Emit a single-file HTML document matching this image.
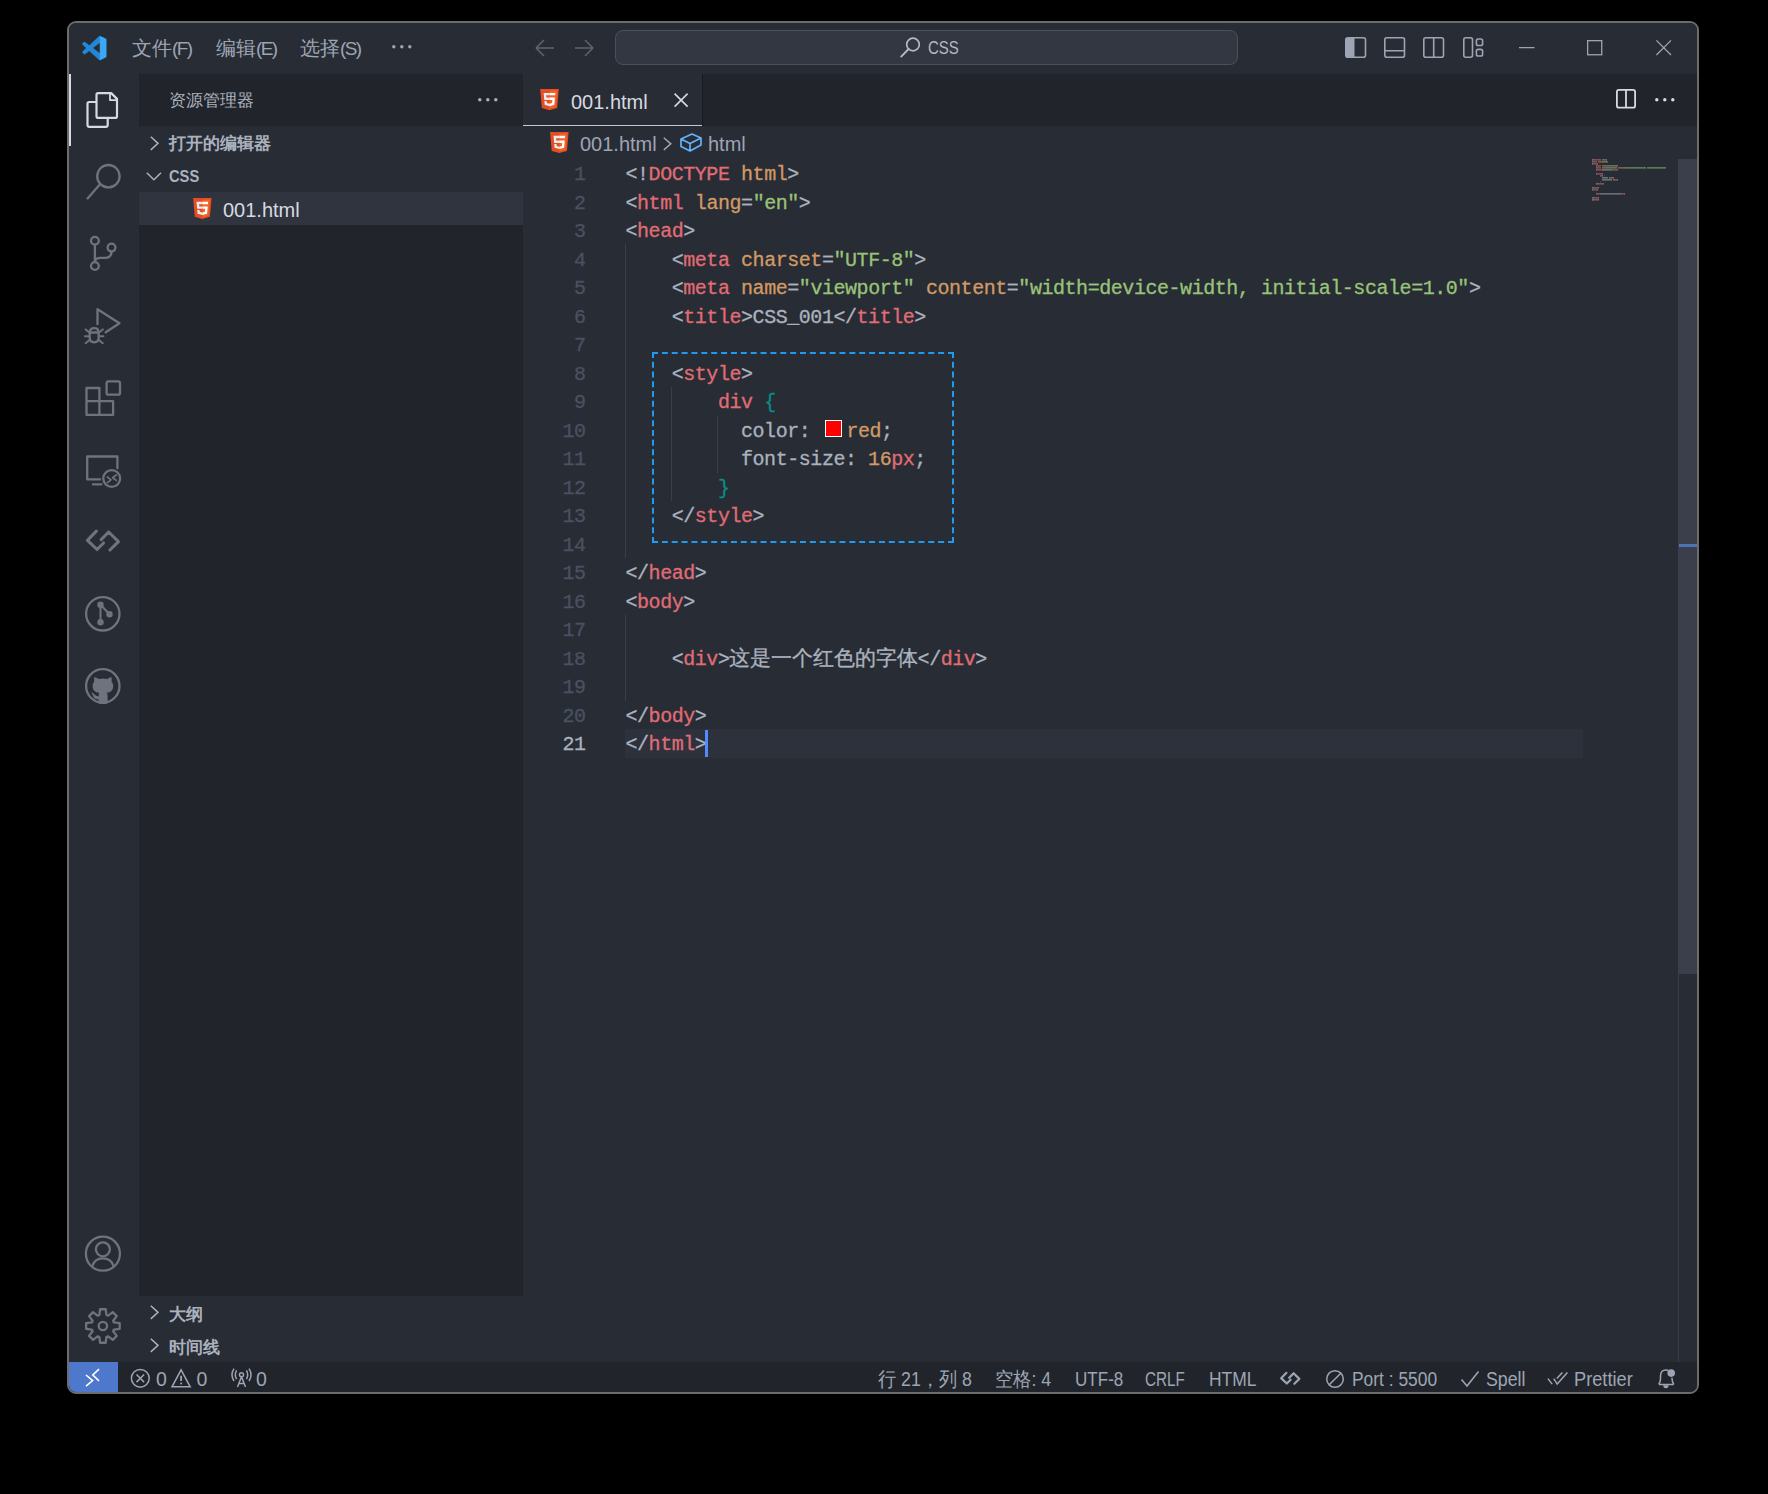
<!DOCTYPE html>
<html><head><meta charset="utf-8">
<style>
*{margin:0;padding:0;box-sizing:border-box}
html,body{width:1768px;height:1494px;background:#000;overflow:hidden}
body{position:relative;font-family:"Liberation Sans",sans-serif}
.a{position:absolute;transform-origin:0 0}
#win{position:absolute;left:67px;top:21px;width:1632px;height:1373px;border:2px solid #6c6c6c;border-radius:9px;overflow:hidden;background:#282c34}
.ui{color:#9da5b4;font-size:20px;white-space:nowrap;line-height:1}
.code{font-family:"Liberation Mono",monospace;font-size:20px;letter-spacing:-0.45px;line-height:28.5px;-webkit-text-stroke:0.3px currentColor}
svg{position:absolute;overflow:visible}
.cl{height:28.5px;white-space:pre}
.ln{height:28.5px}
.ln.cur{color:#abb2bf}
.sw{display:inline-block;width:17px;height:16.5px;background:#f00;border:1.5px solid #fff;margin:0 4.5px 0 3px;vertical-align:0px}
.cjk{font-size:21px;letter-spacing:-0.1px;color:#abb2bf}
.ic{fill:none;stroke:#6e737d;stroke-width:2.3;stroke-linecap:round;stroke-linejoin:round}
.sec{color:#abb2bf;font-size:16.5px;font-weight:bold}
.sb{color:#9da5b4;font-size:19.5px}
</style></head><body>

<div id="win">
<div id="ov" class="a" style="left:-69px;top:-23px;width:1768px;height:1494px">
<!-- TITLE BAR -->
<div class="a" style="left:69px;top:23px;width:1628px;height:51px;background:#282c34"></div>
<svg style="left:81.7px;top:35.8px" width="24.5" height="24.2" viewBox="0 0 100 100">
 <path fill="#2386d6" fill-rule="evenodd" d="M96.46 10.8 L75.86 0.87 a6.24 6.24 0 0 0-7.1 1.21 L29.35 38.04 12.19 25.01 a4.16 4.16 0 0 0-5.32 0.24 L1.37 30.25 a4.16 4.16 0 0 0 0 6.15 L16.26 50 1.37 63.6 a4.16 4.16 0 0 0 0 6.15 l5.5 5 a4.16 4.16 0 0 0 5.32 0.24 l17.16-13 39.41 35.95 a6.21 6.21 0 0 0 7.1 1.2 l20.6-9.9 A6.25 6.25 0 0 0 100 83.7 V16.3 a6.25 6.25 0 0 0-3.54-5.5 Z M75.02 72.7 L45.11 50 75.02 27.3 Z"/>
 <path fill="#3aa8f4" d="M75.86 0.87 L96.46 10.8 a6.25 6.25 0 0 1 3.54 5.5 V83.7 a6.25 6.25 0 0 1-3.54 5.65 L75.86 99.13 a6.2 6.2 0 0 1-3 0.9 V0 a6.2 6.2 0 0 1 3 0.87z"/>
</svg>
<div class="a ui" style="left:132px;top:38px">文件<span style="letter-spacing:-1.6px;font-size:19px">(F)</span></div>
<div class="a ui" style="left:216px;top:38px">编辑<span style="letter-spacing:-1.6px;font-size:19px">(E)</span></div>
<div class="a ui" style="left:300px;top:38px">选择<span style="letter-spacing:-1.6px;font-size:19px">(S)</span></div>
<svg style="left:392px;top:45px" width="20" height="4"><circle cx="1.8" cy="1.8" r="1.7" fill="#9da5b4"/><circle cx="9.8" cy="1.8" r="1.7" fill="#9da5b4"/><circle cx="17.8" cy="1.8" r="1.7" fill="#9da5b4"/></svg>
<svg style="left:535px;top:39px" width="20" height="18"><path d="M1 9 H19 M1 9 L9 1 M1 9 L9 17" stroke="#5c6370" stroke-width="1.6" fill="none"/></svg>
<svg style="left:573.5px;top:39px" width="20" height="18"><path d="M19 9 H1 M19 9 L11 1 M19 9 L11 17" stroke="#5c6370" stroke-width="1.6" fill="none"/></svg>
<div class="a" style="left:615px;top:30px;width:623px;height:35px;background:#333741;border:1.5px solid #4b505b;border-radius:8px"></div>
<svg style="left:899.5px;top:37.2px" width="21" height="21"><circle cx="13" cy="7.5" r="6.3" stroke="#b5b8be" stroke-width="1.7" fill="none"/><path d="M8.6 12 L1.2 19.6" stroke="#b5b8be" stroke-width="1.9" stroke-linecap="round"/></svg>
<div class="a ui" style="left:928px;top:37.5px;font-size:19px;color:#b4b9c2;transform:scaleX(0.79)">CSS</div>
<!-- layout icons -->
<svg style="left:1344.7px;top:36.6px" width="21.3" height="21" viewBox="0 0 21.3 21"><rect x="0.8" y="0.8" width="19.7" height="19.4" rx="2" stroke="#9da5b4" stroke-width="1.6" fill="none"/><path d="M2.5 0.8 H9.5 V20.2 H2.5 Q0.8 20.2 0.8 18.5 V2.5 Q0.8 0.8 2.5 0.8z" fill="#9da5b4"/></svg>
<svg style="left:1383.6px;top:36.6px" width="21.3" height="21" viewBox="0 0 21.3 21"><rect x="0.8" y="0.8" width="19.7" height="19.4" rx="2" stroke="#9da5b4" stroke-width="1.6" fill="none"/><path d="M0.8 13.8 H20.5" stroke="#9da5b4" stroke-width="1.6"/></svg>
<svg style="left:1422.8px;top:36.6px" width="21.3" height="21" viewBox="0 0 21.3 21"><rect x="0.8" y="0.8" width="19.7" height="19.4" rx="2" stroke="#9da5b4" stroke-width="1.6" fill="none"/><path d="M10.7 0.8 V20.2" stroke="#9da5b4" stroke-width="1.6"/></svg>
<svg style="left:1463px;top:36.6px" width="20.4" height="21" viewBox="0 0 20.4 21"><rect x="0.8" y="0.8" width="8.7" height="19.4" rx="2" stroke="#9da5b4" stroke-width="1.6" fill="none"/><rect x="13.4" y="2" width="6.2" height="6.5" rx="1.8" stroke="#9da5b4" stroke-width="1.6" fill="none"/><rect x="13.4" y="12.4" width="6.2" height="6.6" rx="1.8" stroke="#9da5b4" stroke-width="1.6" fill="none"/></svg>
<!-- window controls -->
<svg style="left:1518.5px;top:46.5px" width="16" height="2"><path d="M0 0.7 H15.5" stroke="#9da5b4" stroke-width="1.3"/></svg>
<svg style="left:1586.7px;top:40.2px" width="16" height="16"><rect x="0.65" y="0.65" width="14.1" height="14.1" stroke="#9da5b4" stroke-width="1.3" fill="none"/></svg>
<svg style="left:1655.6px;top:40.2px" width="16" height="16"><path d="M0.4 0.4 L15 15 M15 0.4 L0.4 15" stroke="#9da5b4" stroke-width="1.3"/></svg>

<!-- ACTIVITY BAR -->
<div class="a" style="left:69px;top:74px;width:70px;height:1288px;background:#282c34"></div>
<div class="a" style="left:69px;top:74px;width:1.5px;height:72px;background:#d7dae0"></div>
<!-- explorer -->
<svg style="left:0;top:0" width="1" height="1"><g fill="none" stroke="#d7dae0" stroke-width="2.2" stroke-linejoin="round">
<path d="M96.5 94.8 Q96.5 93.1 98.2 93.1 H111.2 L117 98.9 V116.2 Q117 117.9 115.3 117.9 H98.2 Q96.5 117.9 96.5 116.2 Z"/>
<path d="M110 93.6 V100.2 H116.6" stroke-width="1.8"/>
<path d="M96.5 102 H89.2 Q87.5 102 87.5 103.7 V125.1 Q87.5 126.8 89.2 126.8 H106 Q107.7 126.8 107.7 125.1 V117.9"/>
</g></svg>
<!-- search -->
<svg style="left:0;top:0" width="1" height="1"><g class="ic"><circle cx="108.4" cy="176.2" r="11.2"/><path d="M99.8 184.6 L87.6 198.4"/></g></svg>
<!-- source control -->
<svg style="left:0;top:0" width="1" height="1"><g class="ic"><circle cx="94.9" cy="240.8" r="3.9"/><circle cx="94.9" cy="266" r="3.9"/><circle cx="111.5" cy="247.6" r="3.9"/><path d="M94.9 244.7 V262.1"/><path d="M111.5 251.5 Q111.5 257.8 105 257.8 H100.5 Q94.9 257.8 94.9 262"/></g></svg>
<!-- run and debug -->
<svg style="left:0;top:0" width="1" height="1"><g class="ic" stroke-width="2.2" stroke-linecap="butt" stroke-linejoin="miter"><path d="M97.5 324.2 V309.2 L119.5 323.2 L105.7 332.3"/>
<path d="M89.9 332.5 Q89.9 328.2 94.2 328.2 Q98.5 328.2 98.5 332.5"/>
<path d="M89.7 332.5 H98.7 V337.6 Q98.7 342.3 94.2 342.3 Q89.7 342.3 89.7 337.6 Z"/>
<path d="M85.6 329.4 L89.5 332.6 M102.8 329.4 L98.9 332.6 M85 336.2 H89.7 M98.7 336.2 H103.4 M85.6 343.2 L89.5 339.9 M102.8 343.2 L98.9 339.9" stroke-width="2"/></g></svg>
<!-- extensions -->
<svg style="left:0;top:0" width="1" height="1"><g class="ic" stroke-width="2.4"><path d="M86.5 388 H99.4 V401.2 H113.1 V414.9 H86.5 Z M86.5 401.2 H99.4 V414.9"/><rect x="106.6" y="381.3" width="13.4" height="13.4" rx="1.8"/></g></svg>
<!-- remote explorer -->
<svg style="left:0;top:0" width="1" height="1"><g class="ic" stroke-width="2.4" stroke-linecap="butt" stroke-linejoin="miter"><path d="M100 479.4 H87.2 V456.5 H117.4 V468.3"/><path d="M92.9 484.3 H101.5"/><circle cx="111.7" cy="478.5" r="8.4"/><path d="M107.4 477 L111 479.8 L107.4 482.6 M116.3 475 L112.6 477.7 L116.3 480.4" stroke-width="1.7"/></g></svg>
<!-- live share -->
<svg style="left:0;top:0" width="1" height="1"><g transform="translate(102.95 540.8)" fill="none" stroke="#6e737d" stroke-width="3.1" stroke-linecap="round" stroke-linejoin="round"><path d="M-6.6 -9.6 L-15.5 -0.5 L-5.9 8.7 L0.6 2.2 M-1.8 -1.2 L5.7 -8.8 L15.5 0.8 L7 9.2"/></g></svg>
<!-- git graph -->
<svg style="left:0;top:0" width="1" height="1"><g class="ic" stroke-width="2.5"><circle cx="102.8" cy="613.8" r="16.7"/></g><g fill="#6e737d"><circle cx="100.5" cy="604.8" r="3.2"/><circle cx="100.5" cy="622.2" r="3.2"/><circle cx="109.5" cy="614.2" r="3.2"/></g><path d="M100.5 604.8 V622.2 M100.5 604.8 L109.5 614.2" stroke="#6e737d" stroke-width="2" fill="none"/></svg>
<!-- github -->
<svg style="left:0;top:0" width="1" height="1"><g class="ic" stroke-width="2.5"><circle cx="102.8" cy="685.9" r="16.7"/></g>
<path fill="#6e737d" d="M94.4 677 Q96.5 677.3 98.5 679 Q102.8 678 107.2 679 Q109.2 677.3 111.4 677 Q112 679.5 111.6 681.5 Q113.2 683.5 113.2 686.2 Q113.2 692 106.8 692.8 Q107.6 694 107.6 696 V703.5 Q102.8 704.5 98.6 703.5 V699.2 Q95.5 699.6 93.8 697.4 Q93 695.4 91.2 692.6 Q93.2 692.6 94.6 694.6 Q96 696.4 98.6 696.2 Q98.8 694 99 692.8 Q92.6 692 92.6 686.2 Q92.6 683.5 94.2 681.5 Q93.8 679.5 94.4 677 Z"/></svg>
<!-- account -->
<svg style="left:0;top:0" width="1" height="1"><g class="ic" stroke-width="2.1"><circle cx="102.9" cy="1253.7" r="17"/><circle cx="102.9" cy="1249.3" r="7"/><path d="M92.3 1266 Q94.5 1258.3 102.9 1258.3 Q111.3 1258.3 113.5 1266"/></g></svg>
<!-- gear -->
<svg style="left:0;top:0" width="1" height="1"><g class="ic" stroke-width="2.6" stroke-linejoin="miter"><circle cx="102.9" cy="1326" r="4.2"/><path d="M99.36 1314.95 L100.11 1309.23 L105.69 1309.23 L106.44 1314.95 L108.21 1315.69 L112.78 1312.17 L116.73 1316.12 L113.21 1320.69 L113.95 1322.46 L119.67 1323.21 L119.67 1328.79 L113.95 1329.54 L113.21 1331.31 L116.73 1335.88 L112.78 1339.83 L108.21 1336.31 L106.44 1337.05 L105.69 1342.77 L100.11 1342.77 L99.36 1337.05 L97.59 1336.31 L93.02 1339.83 L89.07 1335.88 L92.59 1331.31 L91.85 1329.54 L86.13 1328.79 L86.13 1323.21 L91.85 1322.46 L92.59 1320.69 L89.07 1316.12 L93.02 1312.17 L97.59 1315.69Z"/></g></svg>

<!-- SIDEBAR -->
<div class="a" style="left:139px;top:74px;width:384px;height:1222px;background:#21252b"></div>
<div class="a" style="left:139px;top:126px;width:384px;height:66px;background:#282c34"></div>
<div class="a" style="left:139px;top:192px;width:384px;height:33px;background:#2f343e"></div>
<div class="a" style="left:139px;top:1296px;width:384px;height:66px;background:#282c34"></div>
<div class="a ui" style="left:169px;top:92px;color:#abb2bf;font-size:16.5px">资源管理器</div>
<svg style="left:478.4px;top:98.3px" width="20" height="4"><circle cx="1.8" cy="1.8" r="1.7" fill="#abb2bf"/><circle cx="9.8" cy="1.8" r="1.7" fill="#abb2bf"/><circle cx="17.8" cy="1.8" r="1.7" fill="#abb2bf"/></svg>
<svg style="left:150.2px;top:135.6px" width="9" height="15"><path d="M0.8 0.8 L8 7.35 L0.8 13.9" stroke="#abb2bf" stroke-width="1.5" fill="none"/></svg>
<div class="a ui sec" style="left:169px;top:135px">打开的编辑器</div>
<svg style="left:146.2px;top:172.4px" width="16" height="9"><path d="M0.8 0.8 L7.9 7.8 L15 0.8" stroke="#abb2bf" stroke-width="1.5" fill="none"/></svg>
<div class="a ui sec" style="left:169px;top:168px;transform:scaleX(0.89)">CSS</div>
<svg style="left:192.6px;top:198.4px" width="18.7" height="21" viewBox="30 0 451 512"><path fill="#e44d26" d="M71,460 L30,0 481,0 440,460 255,512z"/>
<path fill="#f16529" d="M256,472 L405,431 440,37 256,37z"/>
<path fill="#ebebeb" d="M256,208 L181,208 176,150 256,150 256,94 114,94 115,109 129,265 256,265zM256,355 L255,355 192,338 188,293 132,293 139,382 255,414 256,414z"/>
<path fill="#fff" d="M255,208 L255,265 325,265 318,338 255,355 255,414 371,382 372,372 385,223 387,208 371,208zM255,94 L255,150 392,150 393,138 396,109 397,94z"/></svg>
<div class="a ui" style="left:223px;top:200px;color:#d7dae0;font-size:20px">001.html</div>
<svg style="left:150.2px;top:1305px" width="9" height="15"><path d="M0.8 0.8 L8 7.35 L0.8 13.9" stroke="#abb2bf" stroke-width="1.5" fill="none"/></svg>
<div class="a ui sec" style="left:169px;top:1305.5px">大纲</div>
<svg style="left:150.2px;top:1338px" width="9" height="15"><path d="M0.8 0.8 L8 7.35 L0.8 13.9" stroke="#abb2bf" stroke-width="1.5" fill="none"/></svg>
<div class="a ui sec" style="left:169px;top:1339px">时间线</div>

<!-- EDITOR -->
<div class="a" style="left:523px;top:74px;width:1174px;height:52px;background:#21252b"></div>
<div class="a" style="left:523px;top:74px;width:179px;height:52px;background:#282c34"></div>
<div class="a" style="left:523px;top:124.8px;width:179px;height:1.4px;background:#c8c8c8"></div>
<div class="a" style="left:702px;top:74px;width:1px;height:52px;background:#181a1f"></div>
<svg style="left:540.3px;top:89px" width="19" height="21.2" viewBox="30 0 451 512"><path fill="#e44d26" d="M71,460 L30,0 481,0 440,460 255,512z"/>
<path fill="#f16529" d="M256,472 L405,431 440,37 256,37z"/>
<path fill="#ebebeb" d="M256,208 L181,208 176,150 256,150 256,94 114,94 115,109 129,265 256,265zM256,355 L255,355 192,338 188,293 132,293 139,382 255,414 256,414z"/>
<path fill="#fff" d="M255,208 L255,265 325,265 318,338 255,355 255,414 371,382 372,372 385,223 387,208 371,208zM255,94 L255,150 392,150 393,138 396,109 397,94z"/></svg>
<div class="a ui" style="left:571px;top:91.5px;color:#d7dae0">001.html</div>
<svg style="left:674px;top:93px" width="14" height="14"><path d="M0.6 0.6 L13.6 13.6 M13.6 0.6 L0.6 13.6" stroke="#d7dae0" stroke-width="1.6"/></svg>
<!-- split / more -->
<svg style="left:1616px;top:89.4px" width="20" height="20"><rect x="0.9" y="0.9" width="18.2" height="17.8" rx="2" stroke="#d7dae0" stroke-width="1.8" fill="none"/><path d="M10 0.9 V18.7" stroke="#d7dae0" stroke-width="1.8"/></svg>
<svg style="left:1654.6px;top:98.3px" width="20" height="4"><circle cx="1.8" cy="1.8" r="1.7" fill="#d7dae0"/><circle cx="9.8" cy="1.8" r="1.7" fill="#d7dae0"/><circle cx="17.8" cy="1.8" r="1.7" fill="#d7dae0"/></svg>
<!-- breadcrumb -->
<svg style="left:549.7px;top:132px" width="18.7" height="21.1" viewBox="30 0 451 512"><path fill="#e44d26" d="M71,460 L30,0 481,0 440,460 255,512z"/>
<path fill="#f16529" d="M256,472 L405,431 440,37 256,37z"/>
<path fill="#ebebeb" d="M256,208 L181,208 176,150 256,150 256,94 114,94 115,109 129,265 256,265zM256,355 L255,355 192,338 188,293 132,293 139,382 255,414 256,414z"/>
<path fill="#fff" d="M255,208 L255,265 325,265 318,338 255,355 255,414 371,382 372,372 385,223 387,208 371,208zM255,94 L255,150 392,150 393,138 396,109 397,94z"/></svg>
<div class="a ui" style="left:580px;top:133.5px;color:#9da5b4">001.html</div>
<svg style="left:663.2px;top:136.6px" width="9" height="14"><path d="M0.8 0.8 L7.8 6.85 L0.8 12.9" stroke="#9da5b4" stroke-width="1.5" fill="none"/></svg>
<svg style="left:680px;top:132.8px" width="22" height="19"><path d="M1 6 L12 1 L21 5 V12 L10 18 L1 13.5 Z M1 6 L10 10.5 L21 5 M10 10.5 V18" stroke="#62b2fc" stroke-width="1.7" fill="none" stroke-linejoin="round"/></svg>
<div class="a ui" style="left:708px;top:133.5px;color:#9da5b4">html</div>
<!-- current line -->
<div class="a" style="left:625px;top:729px;width:958px;height:28.5px;background:#2c313c"></div>
<!-- indent guides -->
<div class="a" style="left:625px;top:244px;width:1px;height:313.5px;background:#3b4048"></div>
<div class="a" style="left:671px;top:387px;width:1px;height:114px;background:#3b4048"></div>
<div class="a" style="left:717px;top:415.5px;width:1px;height:57px;background:#3b4048"></div>
<div class="a" style="left:625px;top:615px;width:1px;height:85.5px;background:#3b4048"></div>
<div class="a code" style="left:520px;top:161px;width:65.5px;text-align:right;color:#495162">
<div class="ln">1</div>
<div class="ln">2</div>
<div class="ln">3</div>
<div class="ln">4</div>
<div class="ln">5</div>
<div class="ln">6</div>
<div class="ln">7</div>
<div class="ln">8</div>
<div class="ln">9</div>
<div class="ln">10</div>
<div class="ln">11</div>
<div class="ln">12</div>
<div class="ln">13</div>
<div class="ln">14</div>
<div class="ln">15</div>
<div class="ln">16</div>
<div class="ln">17</div>
<div class="ln">18</div>
<div class="ln">19</div>
<div class="ln">20</div>
<div class="ln cur">21</div>
</div>
<div class="a code" style="left:625.5px;top:161px">
<div class="cl"><span style="color:#abb2bf">&lt;!</span><span style="color:#e06c75">DOCTYPE</span><span style="color:#abb2bf"> </span><span style="color:#d19a66">html</span><span style="color:#abb2bf">&gt;</span></div>
<div class="cl"><span style="color:#abb2bf">&lt;</span><span style="color:#e06c75">html</span><span style="color:#abb2bf"> </span><span style="color:#d19a66">lang</span><span style="color:#abb2bf">=</span><span style="color:#98c379">"en"</span><span style="color:#abb2bf">&gt;</span></div>
<div class="cl"><span style="color:#abb2bf">&lt;</span><span style="color:#e06c75">head</span><span style="color:#abb2bf">&gt;</span></div>
<div class="cl"><span style="color:#abb2bf">    &lt;</span><span style="color:#e06c75">meta</span><span style="color:#abb2bf"> </span><span style="color:#d19a66">charset</span><span style="color:#abb2bf">=</span><span style="color:#98c379">"UTF-8"</span><span style="color:#abb2bf">&gt;</span></div>
<div class="cl"><span style="color:#abb2bf">    &lt;</span><span style="color:#e06c75">meta</span><span style="color:#abb2bf"> </span><span style="color:#d19a66">name</span><span style="color:#abb2bf">=</span><span style="color:#98c379">"viewport"</span><span style="color:#abb2bf"> </span><span style="color:#d19a66">content</span><span style="color:#abb2bf">=</span><span style="color:#98c379">"width=device-width, initial-scale=1.0"</span><span style="color:#abb2bf">&gt;</span></div>
<div class="cl"><span style="color:#abb2bf">    &lt;</span><span style="color:#e06c75">title</span><span style="color:#abb2bf">&gt;CSS_001&lt;/</span><span style="color:#e06c75">title</span><span style="color:#abb2bf">&gt;</span></div>
<div class="cl"></div>
<div class="cl"><span style="color:#abb2bf">    &lt;</span><span style="color:#e06c75">style</span><span style="color:#abb2bf">&gt;</span></div>
<div class="cl"><span style="color:#abb2bf">        </span><span style="color:#e06c75">div</span><span style="color:#abb2bf"> </span><span style="color:#0a8c88">{</span></div>
<div class="cl"><span style="color:#abb2bf">          color: </span><span class="sw"></span><span style="color:#d19a66">red</span><span style="color:#abb2bf">;</span></div>
<div class="cl"><span style="color:#abb2bf">          font-size: </span><span style="color:#d19a66">16</span><span style="color:#e06c75">px</span><span style="color:#abb2bf">;</span></div>
<div class="cl"><span style="color:#abb2bf">        </span><span style="color:#0a8c88">}</span></div>
<div class="cl"><span style="color:#abb2bf">    &lt;/</span><span style="color:#e06c75">style</span><span style="color:#abb2bf">&gt;</span></div>
<div class="cl"></div>
<div class="cl"><span style="color:#abb2bf">&lt;/</span><span style="color:#e06c75">head</span><span style="color:#abb2bf">&gt;</span></div>
<div class="cl"><span style="color:#abb2bf">&lt;</span><span style="color:#e06c75">body</span><span style="color:#abb2bf">&gt;</span></div>
<div class="cl"></div>
<div class="cl"><span style="color:#abb2bf">    &lt;</span><span style="color:#e06c75">div</span><span style="color:#abb2bf">&gt;</span><span class="cjk">这是一个红色的字体</span><span style="color:#abb2bf">&lt;/</span><span style="color:#e06c75">div</span><span style="color:#abb2bf">&gt;</span></div>
<div class="cl"></div>
<div class="cl"><span style="color:#abb2bf">&lt;/</span><span style="color:#e06c75">body</span><span style="color:#abb2bf">&gt;</span></div>
<div class="cl"><span style="color:#abb2bf">&lt;/</span><span style="color:#e06c75">html</span><span style="color:#abb2bf">&gt;</span></div>
</div>
<!-- dashed box -->
<div class="a" style="left:652px;top:352px;width:302px;height:191px;border:2px dashed #1e9bf0"></div>
<!-- cursor -->
<div class="a" style="left:705px;top:730px;width:3px;height:27px;background:#528bff"></div>


<!-- minimap -->
<svg style="left:0;top:0" width="1" height="1"><g opacity="0.55"><rect x="1592" y="159.1" width="2" height="1.5" fill="#abb2bf"/><rect x="1594" y="159.1" width="7" height="1.5" fill="#e06c75"/><rect x="1602" y="159.1" width="4" height="1.5" fill="#d19a66"/><rect x="1606" y="159.1" width="1" height="1.5" fill="#abb2bf"/><rect x="1592" y="161.1" width="1" height="1.5" fill="#abb2bf"/><rect x="1593" y="161.1" width="4" height="1.5" fill="#e06c75"/><rect x="1598" y="161.1" width="4" height="1.5" fill="#d19a66"/><rect x="1602" y="161.1" width="1" height="1.5" fill="#abb2bf"/><rect x="1603" y="161.1" width="4" height="1.5" fill="#98c379"/><rect x="1607" y="161.1" width="1" height="1.5" fill="#abb2bf"/><rect x="1592" y="163.1" width="1" height="1.5" fill="#abb2bf"/><rect x="1593" y="163.1" width="4" height="1.5" fill="#e06c75"/><rect x="1597" y="163.1" width="1" height="1.5" fill="#abb2bf"/><rect x="1596" y="165.1" width="1" height="1.5" fill="#abb2bf"/><rect x="1597" y="165.1" width="4" height="1.5" fill="#e06c75"/><rect x="1602" y="165.1" width="7" height="1.5" fill="#d19a66"/><rect x="1609" y="165.1" width="1" height="1.5" fill="#abb2bf"/><rect x="1610" y="165.1" width="7" height="1.5" fill="#98c379"/><rect x="1617" y="165.1" width="1" height="1.5" fill="#abb2bf"/><rect x="1596" y="167.1" width="1" height="1.5" fill="#abb2bf"/><rect x="1597" y="167.1" width="4" height="1.5" fill="#e06c75"/><rect x="1602" y="167.1" width="4" height="1.5" fill="#d19a66"/><rect x="1606" y="167.1" width="1" height="1.5" fill="#abb2bf"/><rect x="1607" y="167.1" width="10" height="1.5" fill="#98c379"/><rect x="1618" y="167.1" width="7" height="1.5" fill="#d19a66"/><rect x="1625" y="167.1" width="1" height="1.5" fill="#abb2bf"/><rect x="1626" y="167.1" width="20" height="1.5" fill="#98c379"/><rect x="1647" y="167.1" width="18" height="1.5" fill="#98c379"/><rect x="1665" y="167.1" width="1" height="1.5" fill="#abb2bf"/><rect x="1596" y="169.1" width="1" height="1.5" fill="#abb2bf"/><rect x="1597" y="169.1" width="5" height="1.5" fill="#e06c75"/><rect x="1602" y="169.1" width="10" height="1.5" fill="#abb2bf"/><rect x="1612" y="169.1" width="5" height="1.5" fill="#e06c75"/><rect x="1617" y="169.1" width="1" height="1.5" fill="#abb2bf"/><rect x="1596" y="173.1" width="1" height="1.5" fill="#abb2bf"/><rect x="1597" y="173.1" width="5" height="1.5" fill="#e06c75"/><rect x="1602" y="173.1" width="1" height="1.5" fill="#abb2bf"/><rect x="1600" y="175.1" width="3" height="1.5" fill="#e06c75"/><rect x="1604" y="175.1" width="1" height="1.5" fill="#0a8c88"/><rect x="1602" y="177.1" width="6" height="1.5" fill="#abb2bf"/><rect x="1609" y="177.1" width="1" height="1.5" fill="#abb2bf"/><rect x="1610" y="177.1" width="3" height="1.5" fill="#d19a66"/><rect x="1613" y="177.1" width="1" height="1.5" fill="#abb2bf"/><rect x="1602" y="179.1" width="10" height="1.5" fill="#abb2bf"/><rect x="1613" y="179.1" width="2" height="1.5" fill="#d19a66"/><rect x="1615" y="179.1" width="2" height="1.5" fill="#e06c75"/><rect x="1617" y="179.1" width="1" height="1.5" fill="#abb2bf"/><rect x="1600" y="181.1" width="1" height="1.5" fill="#0a8c88"/><rect x="1596" y="183.1" width="2" height="1.5" fill="#abb2bf"/><rect x="1598" y="183.1" width="5" height="1.5" fill="#e06c75"/><rect x="1603" y="183.1" width="1" height="1.5" fill="#abb2bf"/><rect x="1592" y="187.1" width="2" height="1.5" fill="#abb2bf"/><rect x="1594" y="187.1" width="4" height="1.5" fill="#e06c75"/><rect x="1598" y="187.1" width="1" height="1.5" fill="#abb2bf"/><rect x="1592" y="189.1" width="1" height="1.5" fill="#abb2bf"/><rect x="1593" y="189.1" width="4" height="1.5" fill="#e06c75"/><rect x="1597" y="189.1" width="1" height="1.5" fill="#abb2bf"/><rect x="1596" y="193.1" width="1" height="1.5" fill="#abb2bf"/><rect x="1597" y="193.1" width="3" height="1.5" fill="#e06c75"/><rect x="1600" y="193.1" width="21" height="1.5" fill="#abb2bf"/><rect x="1621" y="193.1" width="3" height="1.5" fill="#e06c75"/><rect x="1624" y="193.1" width="1" height="1.5" fill="#abb2bf"/><rect x="1592" y="197.1" width="2" height="1.5" fill="#abb2bf"/><rect x="1594" y="197.1" width="4" height="1.5" fill="#e06c75"/><rect x="1598" y="197.1" width="1" height="1.5" fill="#abb2bf"/><rect x="1592" y="199.1" width="2" height="1.5" fill="#abb2bf"/><rect x="1594" y="199.1" width="4" height="1.5" fill="#e06c75"/><rect x="1598" y="199.1" width="1" height="1.5" fill="#abb2bf"/></g></svg>
<!-- scrollbar -->
<div class="a" style="left:1678px;top:159px;width:19px;height:1203px;border-left:1px solid #3a3e47"></div>
<div class="a" style="left:1678px;top:159px;width:19px;height:815px;background:#3a3f4b"></div>
<div class="a" style="left:1679px;top:544px;width:18px;height:3px;background:#4f74b5"></div>

<!-- STATUS BAR -->
<div class="a" style="left:69px;top:1362px;width:1628px;height:30px;background:#21252b"></div>
<div class="a" style="left:69px;top:1362px;width:49px;height:30px;background:#4d78cc"></div>
<svg style="left:0;top:0" width="1" height="1"><path d="M86 1375 L92.6 1380.6 L86 1386.2 M99 1369.2 L92.8 1375 L99 1380.8" stroke="#fff" stroke-width="1.6" fill="none"/></svg>
<!-- errors -->
<svg style="left:0;top:0" width="1" height="1"><g fill="none" stroke="#9da5b4" stroke-width="1.5"><circle cx="140.3" cy="1378.3" r="8.9"/><path d="M136.5 1374.5 L144.1 1382.1 M144.1 1374.5 L136.5 1382.1"/>
<path d="M181.1 1369.8 L190.2 1386.8 H172 Z"/><path d="M181.1 1375.8 V1381" stroke-width="1.8"/></g><circle cx="181.1" cy="1383.4" r="1" fill="#9da5b4"/></svg>
<div class="a ui sb" style="left:156px;top:1370px">0</div>
<div class="a ui sb" style="left:196.5px;top:1370px">0</div>
<svg style="left:0;top:0" width="1" height="1"><g fill="none" stroke="#9da5b4" stroke-width="1.5"><circle cx="241.5" cy="1374.8" r="2"/><path d="M241.5 1376.8 L237.5 1387 M241.5 1376.8 L245.5 1387 M238.8 1383.5 H244.2"/><path d="M236.6 1370.4 Q234 1374.8 236.6 1379.2 M246.4 1370.4 Q249 1374.8 246.4 1379.2 M234 1368.6 Q230 1374.8 234 1381 M249 1368.6 Q253 1374.8 249 1381"/></g></svg>
<div class="a ui sb" style="left:256px;top:1370px">0</div>
<!-- right items -->
<div class="a ui sb" style="left:878px;top:1370px;transform:scaleX(0.909)">行 21，列 8</div>
<div class="a ui sb" style="left:995px;top:1370px;transform:scaleX(0.91)">空格: 4</div>
<div class="a ui sb" style="left:1075px;top:1370px;transform:scaleX(0.874)">UTF-8</div>
<div class="a ui sb" style="left:1145px;top:1370px;transform:scaleX(0.784)">CRLF</div>
<div class="a ui sb" style="left:1209px;top:1370px;transform:scaleX(0.894)">HTML</div>
<svg style="left:0;top:0" width="1" height="1"><g transform="translate(1290.25 1378.45) scale(0.585)" fill="none" stroke="#9da5b4" stroke-width="3.8" stroke-linecap="round" stroke-linejoin="round"><path d="M-6.6 -9.6 L-15.5 -0.5 L-5.9 8.7 L0.6 2.2 M-1.8 -1.2 L5.7 -8.8 L15.5 0.8 L7 9.2"/></g></svg>
<svg style="left:0;top:0" width="1" height="1"><g fill="none" stroke="#9da5b4" stroke-width="1.5"><circle cx="1335" cy="1379" r="8.3"/><path d="M1329.2 1384.8 L1340.8 1373.2"/></g></svg>
<div class="a ui sb" style="left:1351.5px;top:1370px;transform:scaleX(0.892)">Port : 5500</div>
<svg style="left:0;top:0" width="1" height="1"><path d="M1461.5 1379.5 L1467 1386 L1478.5 1371.5" stroke="#9da5b4" stroke-width="1.6" fill="none"/></svg>
<div class="a ui sb" style="left:1485.5px;top:1370px;transform:scaleX(0.91)">Spell</div>
<svg style="left:0;top:0" width="1" height="1"><path d="M1547.9 1378.6 L1552.2 1384.1 M1556.8 1378.6 L1562.4 1372.4 M1553.7 1378.6 L1557.2 1384.1 L1567.4 1372.4" stroke="#9da5b4" stroke-width="1.5" fill="none"/></svg>
<div class="a ui sb" style="left:1574px;top:1370px;transform:scaleX(0.934)">Prettier</div>
<svg style="left:0;top:0" width="1" height="1"><g fill="none" stroke="#9da5b4" stroke-width="1.5" stroke-linejoin="round"><path d="M1658.8 1384.4 H1673.8 M1658.8 1384.4 Q1660.5 1382 1660.5 1378.5 V1376 Q1660.5 1370 1666 1370 Q1667.5 1370 1668.3 1370.5 M1672 1377.8 V1378.5 Q1672 1382 1673.8 1384.4"/></g><path d="M1663.2 1385.2 H1668.6 Q1668.6 1388.2 1665.9 1388.2 Q1663.2 1388.2 1663.2 1385.2Z" fill="#9da5b4"/><circle cx="1671.2" cy="1373.1" r="3.8" fill="#9da5b4"/></svg>
</div>
</div>
</body></html>
